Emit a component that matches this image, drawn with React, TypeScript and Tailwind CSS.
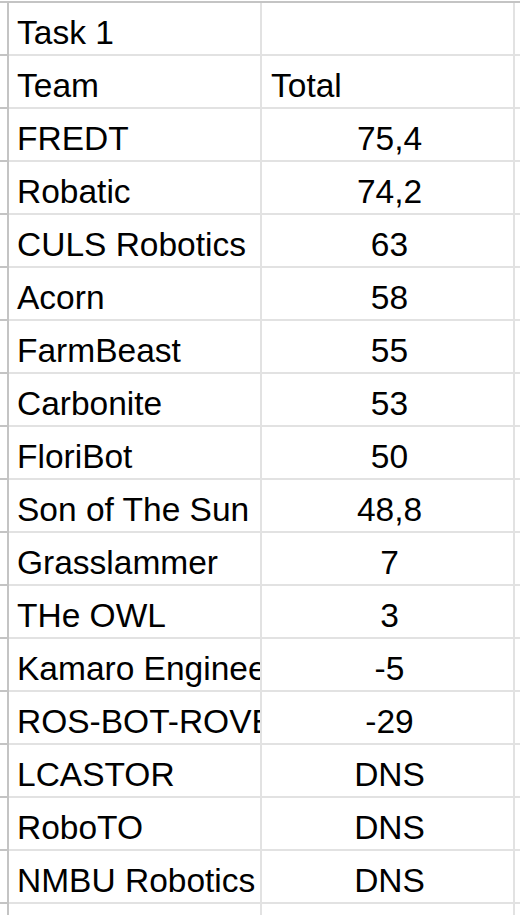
import React from 'react';

const rows: [string, string][] = [
  ['Task 1', ''],
  ['Team', 'Total'],
  ['FREDT', '75,4'],
  ['Robatic', '74,2'],
  ['CULS Robotics', '63'],
  ['Acorn', '58'],
  ['FarmBeast', '55'],
  ['Carbonite', '53'],
  ['FloriBot', '50'],
  ['Son of The Sun', '48,8'],
  ['Grasslammer', '7'],
  ['THe OWL', '3'],
  ['Kamaro Engineering', '-5'],
  ['ROS-BOT-ROVER', '-29'],
  ['LCASTOR', 'DNS'],
  ['RoboTO', 'DNS'],
  ['NMBU Robotics', 'DNS'],
  ['', ''],
];

function Row({ team, total, header }: { team: string; total: string; header: boolean }) {
  return (
    <div className="flex h-[53px] shrink-0">
      <div className="w-[7px] shrink-0 border-b-2 border-[#c4c4c4]" />
      <div className="w-[2px] shrink-0 bg-[#c4c4c4]" />
      <div className="flex w-[251px] shrink-0 items-end overflow-hidden whitespace-nowrap border-b-2 border-[#e2e2e2] pb-[2px] pl-[8px]">
        {team}
      </div>
      <div className="w-[2px] shrink-0 bg-[#e2e2e2]" />
      <div
        className={`flex w-[251px] shrink-0 items-end overflow-hidden whitespace-nowrap border-b-2 border-[#e2e2e2] pb-[2px] ${
          header ? 'justify-start pl-[9px]' : 'justify-center pl-[4px]'
        }`}
      >
        {total}
      </div>
      <div className="w-[2px] shrink-0 bg-[#e2e2e2]" />
      <div className="flex-1 border-b-2 border-[#e2e2e2]" />
    </div>
  );
}

export default function App() {
  return (
    <div className="h-[915px] w-[520px] overflow-hidden bg-white pt-[1px] text-[33.5px] leading-[39px] text-black [font-family:'Liberation_Sans',Arial,sans-serif]">
      <div className="h-[2px] bg-[#c4c4c4]" />
      <div className="flex flex-col">
        {rows.map(([team, total], i) => (
          <Row key={i} team={team} total={total} header={i < 2} />
        ))}
      </div>
    </div>
  );
}
